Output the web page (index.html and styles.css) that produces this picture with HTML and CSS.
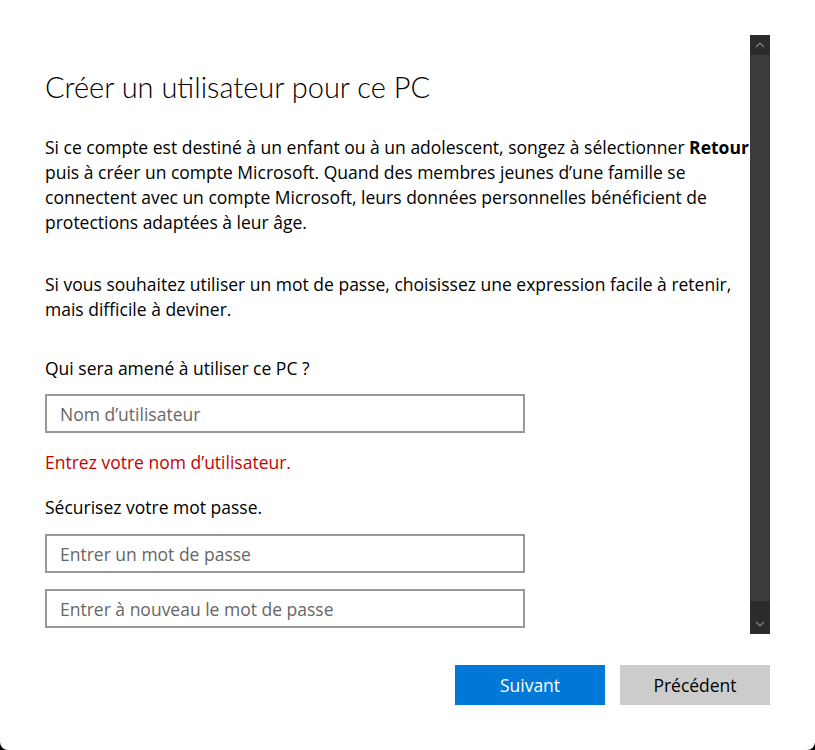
FILE: index.html
```html
<!DOCTYPE html>
<html lang="fr">
<head>
<meta charset="utf-8">
<title>Créer un utilisateur pour ce PC</title>
<link rel="stylesheet" href="styles.css">
</head>
<body>
<div class="window">
  <div class="scroll-area">
    <div class="content">
      <h1 class="title">Créer un utilisateur pour ce PC</h1>
      <p class="para para-first">Si ce compte est destiné à un enfant ou à un adolescent, songez à sélectionner <b>Retour</b><br>puis à créer un compte Microsoft. Quand des membres jeunes d’une famille se<br>connectent avec un compte Microsoft, leurs données personnelles bénéficient de<br>protections adaptées à leur âge.</p>
      <p class="para para-second">Si vous souhaitez utiliser un mot de passe, choisissez une expression facile à retenir,<br>mais difficile à deviner.</p>
      <p class="label label-who">Qui sera amené à utiliser ce PC ?</p>
      <input class="field" type="text" placeholder="Nom d’utilisateur">
      <p class="error">Entrez votre nom d’utilisateur.</p>
      <p class="label label-secure">Sécurisez votre mot passe.</p>
      <input class="field" type="password" placeholder="Entrer un mot de passe">
      <input class="field field-last" type="password" placeholder="Entrer à nouveau le mot de passe">
    </div>
    <div class="scrollbar">
      <div class="sb-arrow">
        <svg width="10" height="6" viewBox="0 0 10 6"><path d="M1 5 L5 1 L9 5" fill="none" stroke="#858585" stroke-width="1.2"/></svg>
      </div>
      <div class="sb-thumb"></div>
      <div class="sb-track"></div>
      <div class="sb-arrow">
        <svg width="10" height="6" viewBox="0 0 10 6"><path d="M1 1 L5 5 L9 1" fill="none" stroke="#858585" stroke-width="1.2"/></svg>
      </div>
    </div>
  </div>
  <div class="buttons">
    <button class="btn btn-primary" type="button">Suivant</button>
    <button class="btn btn-secondary" type="button">Précédent</button>
  </div>
</div>
</body>
</html>
```
FILE: styles.css
```css
html, body {
  margin: 0;
  padding: 0;
  background: #000;
}
body {
  width: 815px;
  height: 750px;
  overflow: hidden;
  font-family: "Segoe UI", "Open Sans", "Noto Sans", sans-serif;
}
.window {
  width: 815px;
  height: 750px;
  background: #fff;
  border-radius: 0 0 8px 8px;
  display: flex;
  flex-direction: column;
  box-sizing: border-box;
  padding-top: 35px;
}
.scroll-area {
  display: flex;
  margin-left: 45px;
  width: 725px;
  height: 599px;
}
.content {
  width: 705px;
  overflow: hidden;
  color: #000;
}
.title {
  margin: 34px 0 0 0;
  font-family: "Lato", "Open Sans", sans-serif;
  font-size: 29px;
  font-weight: 300;
  line-height: 36px;
  color: #000;
  white-space: nowrap;
}
.para {
  margin: 0;
  font-size: 17.5px;
  line-height: 25px;
  white-space: nowrap;
}
.para b {
  font-weight: 700;
}
.para-first {
  margin-top: 30px;
}
.para-second {
  margin-top: 37px;
}
.label {
  margin: 0;
  font-size: 17.5px;
  line-height: 25px;
}
.label-who {
  margin-top: 34px;
}
.field {
  display: block;
  box-sizing: border-box;
  width: 480px;
  height: 39px;
  margin: 13px 0 0 0;
  border: 2px solid #999;
  border-radius: 0;
  padding: 0 13px;
  font-family: inherit;
  font-size: 17.5px;
  color: #000;
  background: #fff;
  outline: none;
}
.field::placeholder {
  color: #666;
}
.field-last {
  margin-top: 16px;
}
.error {
  margin: 17px 0 0 0;
  font-size: 17.5px;
  line-height: 25px;
  color: #c80000;
}
.label-secure {
  margin-top: 20px;
}
.label-secure + .field {
  margin-top: 14px;
}
.scrollbar {
  width: 20px;
  display: flex;
  flex-direction: column;
  background: #2b2b2b;
}
.sb-arrow {
  height: 20px;
  display: flex;
  align-items: center;
  justify-content: center;
  background: #2b2b2b;
}
.sb-thumb {
  height: 546px;
  background: #3c3c3c;
}
.sb-track {
  flex: 1;
}
.buttons {
  display: flex;
  justify-content: flex-end;
  gap: 15px;
  padding-right: 45px;
  margin-top: 31px;
}
.btn {
  width: 150px;
  height: 40px;
  border: none;
  border-radius: 0;
  font-family: inherit;
  font-size: 17.5px;
  padding: 0;
  cursor: default;
}
.btn-primary {
  background: #0078d7;
  color: #fff;
}
.btn-secondary {
  background: #ccc;
  color: #000;
}
```
